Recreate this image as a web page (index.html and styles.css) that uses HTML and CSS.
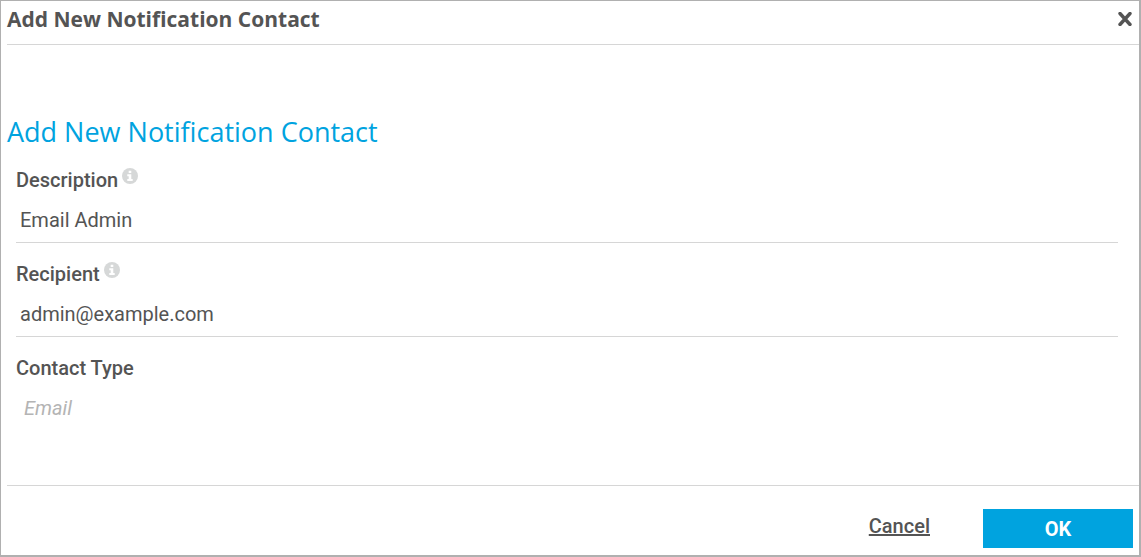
FILE: index.html
```html
<!DOCTYPE html>
<html lang="en">

<head>
    <meta charset="UTF-8">
    <meta name="viewport" content="width=device-width, initial-scale=1.0">
    <title>Add New Notification Contact</title>
    <link rel="stylesheet" href="styles.css">
</head>

<body>
    <form class="dialog">
        <header class="dialog-header">
            <h1 class="dialog-title">Add New Notification Contact</h1>
            <button type="button" class="close" aria-label="Close">
                <svg width="14" height="14" viewBox="0 0 14 14">
                    <path d="M2 1.5L12 12.5M12 1.5L2 12.5" stroke="currentColor" stroke-width="3.4" stroke-linecap="round" />
                </svg>
            </button>
        </header>

        <main class="dialog-body">
            <h2 class="section-title">Add New Notification Contact</h2>

            <div class="field">
                <div class="field-head">
                    <label for="description">Description</label>
                    <svg class="info" width="16" height="16" viewBox="0 0 16 16">
                        <circle cx="8" cy="8" r="8" />
                        <path d="M6.7 2.7h2.6v2.2H6.7zM5.3 6.3h4v4.8h1.4V13H5.3v-1.9h1.4V8.2H5.3z" />
                    </svg>
                </div>
                <input type="text" id="description" value="Email Admin">
            </div>

            <div class="field">
                <div class="field-head">
                    <label for="recipient">Recipient</label>
                    <svg class="info" width="16" height="16" viewBox="0 0 16 16">
                        <circle cx="8" cy="8" r="8" />
                        <path d="M6.7 2.7h2.6v2.2H6.7zM5.3 6.3h4v4.8h1.4V13H5.3v-1.9h1.4V8.2H5.3z" />
                    </svg>
                </div>
                <input type="text" id="recipient" value="admin@example.com">
            </div>

            <div class="field">
                <div class="field-head">
                    <label for="contact-type">Contact Type</label>
                </div>
                <input type="text" id="contact-type" class="readonly" value="Email" readonly>
            </div>
        </main>

        <footer class="dialog-footer">
            <a href="#" class="cancel">Cancel</a>
            <button type="submit" class="ok">OK</button>
        </footer>
    </form>
</body>

</html>
```

FILE: styles.css
```css
* {
    box-sizing: border-box;
    margin: 0;
    padding: 0;
}

body {
    background: #fff;
    color: #545454;
    font-family: Roboto, "Liberation Sans", sans-serif;
    font-size: 20px;
    line-height: 24px;
}

.dialog {
    display: flex;
    flex-direction: column;
    min-height: 100vh;
    border: 1px solid #b0b0b0;
    border-right-width: 2px;
    border-bottom-width: 2px;
    padding-left: 6px;
}

/* header */
.dialog-header {
    display: flex;
    align-items: center;
    justify-content: space-between;
    padding: 4px 7px 11px 0;
    border-bottom: 1px solid #d6d6d6;
}

.dialog-title {
    font-family: "Open Sans", sans-serif;
    font-size: 21px;
    font-weight: 700;
    line-height: 28px;
}

.close {
    display: flex;
    border: 0;
    background: none;
    color: #545454;
    cursor: pointer;
}

/* form */
.dialog-body {
    flex: 1;
    padding: 68px 21px 16px 0;
}

.section-title {
    margin-bottom: 17px;
    color: #00a3df;
    font-family: "Open Sans", sans-serif;
    font-size: 27px;
    font-weight: 400;
    line-height: 38px;
}

.field {
    margin: 0 0 19px 9px;
}

.field-head {
    display: flex;
    gap: 4px;
    margin-bottom: 6px;
    font-weight: 500;
}

.info circle {
    fill: #d6d8d8;
}

.info path {
    fill: #fff;
}

.field input {
    display: block;
    width: 100%;
    height: 45px;
    padding: 0 4px;
    border: 0;
    border-bottom: 1px solid #d6d6d6;
    outline: 0;
    background: none;
    color: inherit;
    font: inherit;
}

.field .readonly {
    padding: 0 8px;
    border-bottom-color: transparent;
    color: #b4b4b4;
    font-style: italic;
}

/* footer */
.dialog-footer {
    display: flex;
    align-items: center;
    justify-content: flex-end;
    gap: 53px;
    padding: 23px 6px 7px 0;
    border-top: 1px solid #d6d6d6;
}

.cancel {
    padding-bottom: 6px;
    color: inherit;
    font-weight: 500;
}

.ok {
    width: 150px;
    height: 39px;
    border: 0;
    background: #00a3df;
    color: #fff;
    font: inherit;
    font-weight: 700;
    cursor: pointer;
}
```
